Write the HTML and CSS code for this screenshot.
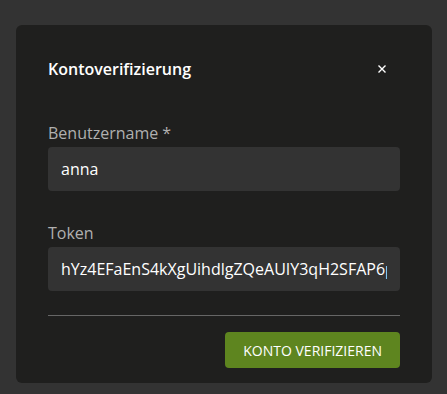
FILE: index.html
```html
<!DOCTYPE html>
<html lang="de">
  <head>
    <meta charset="UTF-8" />
    <meta name="viewport" content="width=device-width, initial-scale=1.0" />
    <title>Kontoverifizierung</title>

    <link rel="stylesheet" href="styles.css">
  </head>
  <body>
    <div class="dialog">
      <div class="dialog-header">
        <h2 class="dialog-title">Kontoverifizierung</h2>
        <button class="close-btn" type="button" aria-label="Schließen">
          <svg width="8" height="8" viewBox="0 0 8 8">
            <path d="M0.5 0.5 L7.5 7.5 M7.5 0.5 L0.5 7.5" stroke="#fff" stroke-width="1.4" />
          </svg>
        </button>
      </div>

      <form id="verifyForm">
        <div class="form-group">
          <label for="username">Benutzername *</label>
          <input type="text" id="username" value="anna" required />
        </div>

        <div class="form-group">
          <label for="token">Token</label>
          <input type="text" id="token" value="hYz4EFaEnS4kXgUihdlgZQeAUIY3qH2SFAP6pW8mTx" />
        </div>

        <div class="dialog-actions">
          <button type="submit" class="verify-btn">Konto verifizieren</button>
        </div>
      </form>
    </div>
  </body>
</html>
```

FILE: styles.css
```css
body {
  margin: 0;
  padding: 25px 15px 10px 16px;
  background-color: #333333;
  font-family: "Open Sans", sans-serif;
}

.dialog {
  background-color: #1f1f1e;
  border-radius: 6px;
  padding: 32px 32px 15px 32px;
}

.dialog-header {
  display: flex;
  align-items: center;
  justify-content: space-between;
  height: 24px;
}

.dialog-title {
  margin: 0;
  font-size: 16px;
  font-weight: 600;
  color: #ffffff;
  line-height: 24px;
}

.close-btn {
  background: none;
  border: none;
  padding: 0;
  margin-right: 14px;
  width: 8px;
  height: 8px;
  display: flex;
  cursor: pointer;
}

form {
  margin-top: 40px;
}

.form-group {
  margin-bottom: 30px;
}

label {
  display: block;
  margin-bottom: 2px;
  color: #b0b0b0;
  font-size: 16px;
  line-height: 24px;
}

input {
  width: 100%;
  height: 44px;
  padding: 0 13px;
  box-sizing: border-box;
  border: none;
  border-radius: 4px;
  background-color: #333333;
  color: #ffffff;
  font-family: "Open Sans", sans-serif;
  font-size: 16px;
  outline: none;
}

.dialog-actions {
  border-top: 1px solid #666666;
  margin-top: -6px;
  padding-top: 16px;
  display: flex;
  justify-content: flex-end;
}

.verify-btn {
  background-color: #5e851f;
  color: #ffffff;
  border: none;
  border-radius: 4px;
  height: 36px;
  padding: 0 18px;
  font-family: "Open Sans", sans-serif;
  font-size: 14px;
  text-transform: uppercase;
  cursor: pointer;
}
```
